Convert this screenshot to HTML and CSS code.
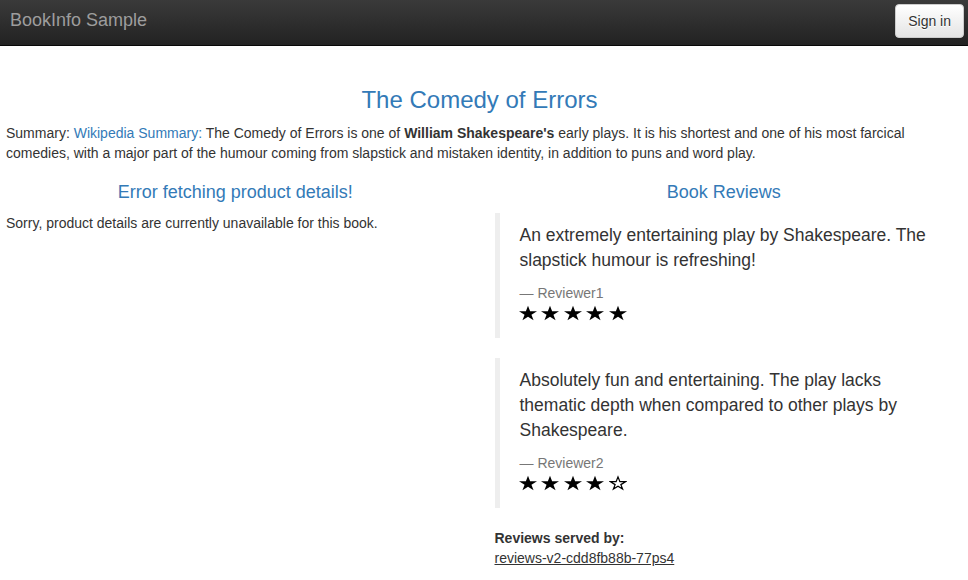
FILE: index.html
```html
<!DOCTYPE html>
<html lang="en">
<head>
<meta charset="utf-8">
<title>Simple Bookstore App</title>
<link rel="stylesheet" href="styles.css">
</head>
<body>
<nav class="navbar">
  <a class="brand" href="#">BookInfo Sample</a>
  <button class="btn-signin" type="button">Sign in</button>
</nav>

<main class="page">
  <section class="intro">
    <h3 class="title">The Comedy of Errors</h3>
    <p class="summary">Summary: <a class="link" href="#">Wikipedia Summary:</a> The Comedy of Errors is one of <b>William Shakespeare's</b> early plays. It is his shortest and one of his most farcical comedies, with a major part of the humour coming from slapstick and mistaken identity, in addition to puns and word play.</p>
  </section>

  <section class="row">
    <div class="col">
      <h4 class="subtitle">Error fetching product details!</h4>
      <p class="text">Sorry, product details are currently unavailable for this book.</p>
    </div>
    <div class="col">
      <h4 class="subtitle">Book Reviews</h4>
      <blockquote class="review">
        <p class="review-text">An extremely entertaining play by Shakespeare. The slapstick humour is refreshing!</p>
        <small class="reviewer">&mdash;&nbsp;Reviewer1</small>
        <div class="stars">
          <svg class="star" viewBox="0 0 20 16"><polygon points="10,0 12.36,6.11 20,6.11 13.82,9.89 16.18,16 10,12.22 3.82,16 6.18,9.89 0,6.11 7.64,6.11"/></svg>
          <svg class="star" viewBox="0 0 20 16"><polygon points="10,0 12.36,6.11 20,6.11 13.82,9.89 16.18,16 10,12.22 3.82,16 6.18,9.89 0,6.11 7.64,6.11"/></svg>
          <svg class="star" viewBox="0 0 20 16"><polygon points="10,0 12.36,6.11 20,6.11 13.82,9.89 16.18,16 10,12.22 3.82,16 6.18,9.89 0,6.11 7.64,6.11"/></svg>
          <svg class="star" viewBox="0 0 20 16"><polygon points="10,0 12.36,6.11 20,6.11 13.82,9.89 16.18,16 10,12.22 3.82,16 6.18,9.89 0,6.11 7.64,6.11"/></svg>
          <svg class="star" viewBox="0 0 20 16"><polygon points="10,0 12.36,6.11 20,6.11 13.82,9.89 16.18,16 10,12.22 3.82,16 6.18,9.89 0,6.11 7.64,6.11"/></svg>
        </div>
      </blockquote>
      <blockquote class="review">
        <p class="review-text">Absolutely fun and entertaining. The play lacks thematic depth when compared to other plays by Shakespeare.</p>
        <small class="reviewer">&mdash;&nbsp;Reviewer2</small>
        <div class="stars">
          <svg class="star" viewBox="0 0 20 16"><polygon points="10,0 12.36,6.11 20,6.11 13.82,9.89 16.18,16 10,12.22 3.82,16 6.18,9.89 0,6.11 7.64,6.11"/></svg>
          <svg class="star" viewBox="0 0 20 16"><polygon points="10,0 12.36,6.11 20,6.11 13.82,9.89 16.18,16 10,12.22 3.82,16 6.18,9.89 0,6.11 7.64,6.11"/></svg>
          <svg class="star" viewBox="0 0 20 16"><polygon points="10,0 12.36,6.11 20,6.11 13.82,9.89 16.18,16 10,12.22 3.82,16 6.18,9.89 0,6.11 7.64,6.11"/></svg>
          <svg class="star" viewBox="0 0 20 16"><polygon points="10,0 12.36,6.11 20,6.11 13.82,9.89 16.18,16 10,12.22 3.82,16 6.18,9.89 0,6.11 7.64,6.11"/></svg>
          <svg class="star star-empty" viewBox="0 0 20 16"><polygon points="10,1.2 12.1,6.6 18.2,6.6 13.2,9.8 15.1,14.8 10,11.7 4.9,14.8 6.8,9.8 1.8,6.6 7.9,6.6"/></svg>
        </div>
      </blockquote>
      <dl class="served">
        <dt class="served-label">Reviews served by:</dt>
        <dd class="served-value"><u>reviews-v2-cdd8fb88b-77ps4</u></dd>
      </dl>
    </div>
  </section>
</main>
</body>
</html>
```

FILE: styles.css
```css
* {
  box-sizing: border-box;
}

html, body {
  margin: 0;
  padding: 0;
  background: #fff;
}

body {
  font-family: "Liberation Sans", Arial, Helvetica, sans-serif;
  font-size: 14px;
  line-height: 1.42857143;
  color: #333;
}

/* Navbar */
.navbar {
  display: flex;
  justify-content: space-between;
  align-items: flex-start;
  height: 46px;
  background-color: #222;
  background-image: linear-gradient(to bottom, #3a3a3a 0, #222 100%);
  border-bottom: 1px solid #080808;
}

.brand {
  padding: 10px 10px 0 10px;
  font-size: 18px;
  line-height: 21px;
  color: #9d9d9d;
  text-decoration: none;
}

.btn-signin {
  margin: 4px 4px 0 0;
  height: 34px;
  padding: 0 12px;
  font-family: inherit;
  font-size: 14px;
  line-height: 20px;
  color: #333;
  background-color: #fff;
  background-image: linear-gradient(to bottom, #fff 0, #e4e4e4 100%);
  border: 1px solid #ccc;
  border-radius: 4px;
  text-shadow: 0 1px 0 #fff;
  box-shadow: inset 0 1px 0 rgba(255,255,255,.15), 0 1px 1px rgba(0,0,0,.075);
  cursor: pointer;
}

/* Page */
.page {
  padding: 41px 15px 0 6px;
}

.title {
  margin: 0 0 10px;
  font-size: 24px;
  font-weight: 500;
  line-height: 1.1;
  color: #337ab7;
  text-align: center;
}

.summary {
  margin: 0 0 10px;
}

.link {
  color: #337ab7;
  text-decoration: none;
}

.row {
  display: grid;
  grid-template-columns: 1fr 1fr;
  column-gap: 30px;
}

.col {
  min-width: 0;
}

.subtitle {
  margin: 10px 0 10px;
  font-size: 18px;
  font-weight: 500;
  line-height: 1.1;
  color: #337ab7;
  text-align: center;
}

.text {
  margin: 0 0 10px;
}

/* Reviews */
.review {
  margin: 0 0 20px;
  padding: 10px 20px;
  font-size: 17.5px;
  border-left: 5px solid #eee;
}

.review-text {
  margin: 0 0 10px;
}

.reviewer {
  display: block;
  font-size: 80%;
  line-height: 1.42857143;
  color: #777;
}

.stars {
  display: flex;
  gap: 4.6px;
  height: 25px;
  padding-top: 2px;
  margin-left: -1px;
}

.star {
  width: 18px;
  height: 16px;
  fill: #000;
}

.star-empty {
  fill: #fff;
  stroke: #000;
  stroke-width: 1.4;
  stroke-linejoin: miter;
}

.served {
  margin: 0 0 20px;
}

.served-label {
  font-weight: 700;
  line-height: 1.42857143;
}

.served-value {
  margin: 0;
  color: #333;
}
```
